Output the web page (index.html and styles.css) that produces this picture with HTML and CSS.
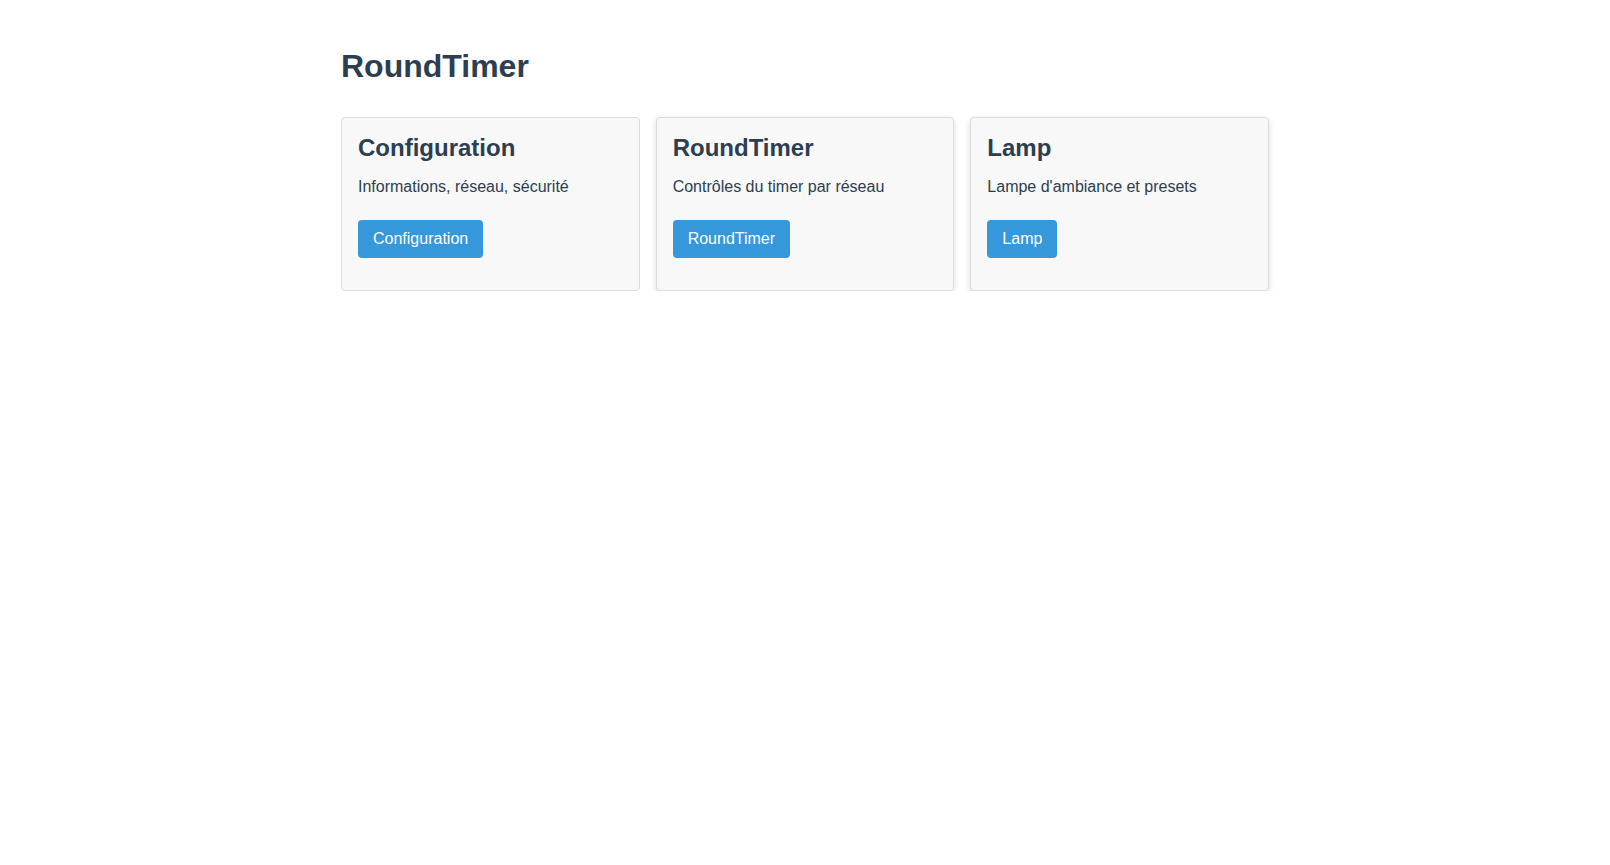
FILE: index.html
```html
<!DOCTYPE html>
<html lang="fr">
<head>
<meta charset="utf-8">
<title>RoundTimer</title>
<link rel="stylesheet" href="styles.css">
</head>
<body>
<main class="container">
  <h1 class="page-title">RoundTimer</h1>
  <div class="grid">
    <section class="card">
      <h2 class="card-title">Configuration</h2>
      <p class="card-desc">Informations, réseau, sécurité</p>
      <a class="btn" href="#">Configuration</a>
    </section>
    <section class="card card-raised">
      <h2 class="card-title">RoundTimer</h2>
      <p class="card-desc">Contrôles du timer par réseau</p>
      <a class="btn" href="#">RoundTimer</a>
    </section>
    <section class="card card-raised">
      <h2 class="card-title">Lamp</h2>
      <p class="card-desc">Lampe d'ambiance et presets</p>
      <a class="btn" href="#">Lamp</a>
    </section>
  </div>
</main>
</body>
</html>
```
FILE: styles.css
```css
html, body {
  margin: 0;
  padding: 0;
  background: #ffffff;
}
body {
  font-family: "Liberation Sans", Arial, sans-serif;
  font-size: 16px;
  line-height: 1.5;
  color: #2c3e50;
}
.container {
  max-width: 928px;
  margin: 0 auto;
  padding: 0 16px;
}
.page-title {
  font-size: 32px;
  font-weight: bold;
  line-height: 1.2;
  margin: 47px 0 0;
  color: #2c3e50;
}
.grid {
  display: grid;
  grid-template-columns: repeat(3, 1fr);
  gap: 16px;
  margin-top: 32px;
}
.card {
  display: flex;
  flex-direction: column;
  align-items: flex-start;
  background: #f8f8f8;
  border: 1px solid #dcdcdc;
  border-radius: 4px;
  padding: 16px 16px 32px;
}
.card-raised {
  box-shadow: 0 2px 6px rgba(0, 0, 0, 0.14);
}
.card-title {
  font-size: 24px;
  font-weight: bold;
  line-height: 1.2;
  margin: 0 0 12px;
  color: #2c3e50;
}
.card-desc {
  margin: 0 0 21px;
  color: #2c3e50;
}
.btn {
  display: inline-block;
  background: #3498db;
  color: #ffffff;
  text-decoration: none;
  border-radius: 4px;
  padding: 7px 15px;
  line-height: 24px;
  font-size: 16px;
}
```
